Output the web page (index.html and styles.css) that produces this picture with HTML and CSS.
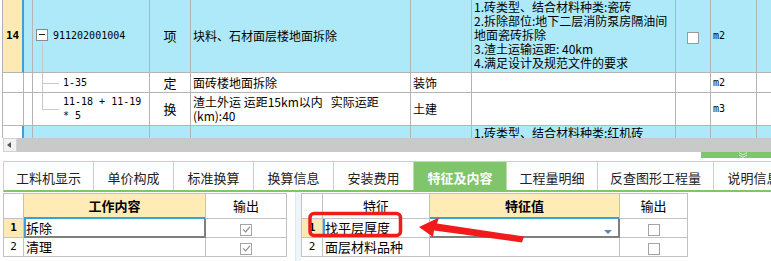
FILE: index.html
```html
<!DOCTYPE html>
<html lang="zh-CN">
<head>
<meta charset="UTF-8" />
<title>清单特征及内容</title>
<link rel="stylesheet" href="styles.css">
</head>
<body>

  <div class="grid-wrap">
    <table class="bill">
      <colgroup>
        <col class="c-num"><col class="c-gap"><col class="c-code"><col class="c-type"><col class="c-name">
        <col class="c-major"><col class="c-feat"><col class="c-chk"><col class="c-unit"><col class="c-rest">
      </colgroup>
      <tr class="item">
        <td class="num">14</td>
        <td></td>
        <td class="code root"><span class="fold"></span>911202001004</td>
        <td class="type">项</td>
        <td>块料、石材面层楼地面拆除</td>
        <td></td>
        <td class="feat">1.砖类型、结合材料种类:瓷砖<br>2.拆除部位:地下二层消防泵房隔油间<br>地面瓷砖拆除<br>3.渣土运输运距: 40km<br>4.满足设计及规范文件的要求</td>
        <td class="chk"><span class="box"></span></td>
        <td class="unit">m2</td>
        <td></td>
      </tr>
      <tr class="sub first">
        <td class="num"></td>
        <td></td>
        <td class="code leaf">1-35</td>
        <td class="type">定</td>
        <td>面砖楼地面拆除</td>
        <td>装饰</td>
        <td></td>
        <td></td>
        <td class="unit">m2</td>
        <td></td>
      </tr>
      <tr class="sub last">
        <td class="num"></td>
        <td></td>
        <td class="code leaf">11-18 + 11-19<br>* 5</td>
        <td class="type">换</td>
        <td class="twoline">渣土外运 运距15km以内&nbsp;&nbsp;&nbsp;实际运距<br>(km):40</td>
        <td>土建</td>
        <td></td>
        <td></td>
        <td class="unit">m3</td>
        <td></td>
      </tr>
      <tr class="item next">
        <td class="num"></td>
        <td></td>
        <td></td>
        <td></td>
        <td></td>
        <td></td>
        <td class="feat">1.砖类型、结合材料种类:红机砖</td>
        <td></td>
        <td></td>
        <td></td>
      </tr>
    </table>
  </div>

  <div class="hscroll">
    <span class="hscroll-btn"></span>
    <span class="hscroll-track"></span>
  </div>

  <div class="splitter">
    <span class="grip">
      <svg width="10" height="6" viewBox="0 0 10 6"><path d="M1 0.5 L5 3 L9 0.5 M1 3 L5 5.5 L9 3" stroke="#d9f0d2" stroke-width="1" fill="none"/></svg>
    </span>
  </div>

  <div class="tabs">
    <div class="tab tab-first">工料机显示</div>
    <div class="tab">单价构成</div>
    <div class="tab">标准换算</div>
    <div class="tab">换算信息</div>
    <div class="tab">安装费用</div>
    <div class="tab tab-on">特征及内容</div>
    <div class="tab tab-mid">工程量明细</div>
    <div class="tab tab-long">反查图形工程量</div>
    <div class="tab">说明信息</div>
  </div>

  <div class="detail">
    <table class="sheet work">
      <colgroup><col class="w-num"><col class="w-content"><col class="w-out"></colgroup>
      <tr>
        <th></th>
        <th class="hl focus">工作内容</th>
        <th>输出</th>
      </tr>
      <tr>
        <td class="rn cur">1</td>
        <td class="edit">拆除</td>
        <td class="mid"><span class="cb"><svg width="9" height="9" viewBox="0 0 9 9"><path d="M1.2 4.4 L3.6 6.8 L7.9 1.8" stroke="#8c8c8c" stroke-width="1.2" fill="none"/></svg></span></td>
      </tr>
      <tr>
        <td class="rn">2</td>
        <td>清理</td>
        <td class="mid"><span class="cb"><svg width="9" height="9" viewBox="0 0 9 9"><path d="M1.2 4.4 L3.6 6.8 L7.9 1.8" stroke="#8c8c8c" stroke-width="1.2" fill="none"/></svg></span></td>
      </tr>
    </table>

    <div class="strip"></div>

    <table class="sheet feature">
      <colgroup><col class="w-num2"><col class="w-name"><col class="w-value"><col class="w-out2"></colgroup>
      <tr>
        <th></th>
        <th>特征</th>
        <th class="hl focus">特征值</th>
        <th>输出</th>
      </tr>
      <tr>
        <td class="rn cur">1</td>
        <td class="sel">找平层厚度</td>
        <td class="edit"><span class="drop"></span></td>
        <td class="mid"><span class="cb"></span></td>
      </tr>
      <tr>
        <td class="rn">2</td>
        <td>面层材料品种</td>
        <td></td>
        <td class="mid"><span class="cb"></span></td>
      </tr>
    </table>
  </div>

  <!-- red markup drawn over the screenshot -->
  <svg class="annot" width="771" height="261" viewBox="0 0 771 261">
    <rect x="310" y="213.5" width="90.5" height="22" rx="4" fill="none" stroke="#f01c1c" stroke-width="3.5"/>
    <polygon points="419,227 439,217.5 437,223.5 524,236.5 522,242.5 434,230.5 433,237" fill="#f01c1c"/>
  </svg>

</body>
</html>
```

FILE: styles.css
```css
* {
  box-sizing: border-box;
}

body {
  margin: 0;
  width: 771px;
  height: 261px;
  overflow: hidden;
  position: relative;
  background: #fff;
  color: #000;
  font-family: "Noto Sans CJK SC", "Noto Sans", sans-serif;
  font-size: 12px;
}

/* ---------- top bill grid ---------- */
.grid-wrap {
  height: 138px;
  overflow: hidden;
  padding-left: 2px;
}

.bill {
  border-collapse: separate;
  border-spacing: 0;
  table-layout: fixed;
  width: 799px;
}
.c-num { width: 22px; }
.c-gap { width: 9px; }
.c-code { width: 117px; }
.c-type { width: 41px; }
.c-name { width: 220px; }
.c-major { width: 61px; }
.c-feat { width: 204px; }
.c-chk { width: 35px; }
.c-unit { width: 46px; }
.c-rest { width: 44px; }

.bill td {
  position: relative;
  border-right: 1px solid #b4b4b4;
  border-bottom: 1px solid #b4b4b4;
  padding: 0 2px;
  line-height: 14px;
  vertical-align: middle;
  white-space: nowrap;
  overflow: hidden;
  background: #fff;
}
.bill td:first-child {
  border-left: 1px solid #b4b4b4;
}

.bill .item td { background: #ade9f9; }
.bill .item { height: 73px; }
.bill .sub.first { height: 20px; }
.bill .sub.last { height: 33px; }
.bill .item.next { height: 40px; }
.bill .item.next td { vertical-align: top; }
.bill .item.next td.num { background: #fff; }

.bill .item td.num {
  background: #fde9b3;
  border-right: 2px solid #3ba0d8;
  text-align: center;
  font-family: "DejaVu Sans Mono", monospace;
  font-size: 11px;
  font-weight: bold;
}

.code {
  font-family: "DejaVu Sans Mono", monospace;
  font-size: 10px;
}
.code.root { padding-left: 3px; }
.code.leaf { padding-left: 30px; }

.twoline { line-height: 14.5px; }

.fold {
  display: inline-block;
  vertical-align: middle;
  position: relative;
  width: 12px;
  height: 12px;
  margin: -2px 5px 0 0;
  border: 1px solid #8a8a8a;
  background: #fff;
}
.fold::after {
  content: "";
  position: absolute;
  left: 2px;
  right: 2px;
  top: 4px;
  border-top: 1px solid #222;
}

/* tree connectors */
.code.root::after {
  content: "";
  position: absolute;
  left: 9px;
  top: 43px;
  bottom: -1px;
  border-left: 1px solid #c8c8c8;
}
.code.leaf::before {
  content: "";
  position: absolute;
  left: 9px;
  top: 0;
  height: 50%;
  width: 16px;
  border-left: 1px solid #c8c8c8;
  border-bottom: 1px solid #c8c8c8;
}
.sub.first .code.leaf::after {
  content: "";
  position: absolute;
  left: 9px;
  top: 50%;
  bottom: -1px;
  border-left: 1px solid #c8c8c8;
}

.type { text-align: center; font-size: 13px; }

.feat {
  vertical-align: top;
  padding: 0 0 0 2px;
  line-height: 14.4px;
}
.bill .item td.feat { vertical-align: top; }

.chk { text-align: center; }
.box {
  display: inline-block;
  width: 12px;
  height: 12px;
  margin-top: 2px;
  border: 1px solid #9a9a9a;
  background: #fff;
  vertical-align: middle;
}

.unit {
  font-family: "DejaVu Sans Mono", monospace;
  font-size: 10px;
}

/* ---------- horizontal scroll bar ---------- */
.hscroll {
  display: flex;
  height: 14px;
  padding-left: 3px;
}
.hscroll-btn {
  position: relative;
  width: 14px;
  background: #f2f2f2;
  border: 1px solid #d2d2d2;
}
.hscroll-btn::after {
  content: "";
  position: absolute;
  left: 3px;
  top: 3px;
  border-top: 3px solid transparent;
  border-bottom: 3px solid transparent;
  border-right: 4px solid #555;
}
.hscroll-track {
  flex: 1;
  background: #c9c9c9;
}

/* ---------- splitter ---------- */
.splitter {
  display: flex;
  justify-content: flex-end;
  height: 9px;
}
.grip {
  display: flex;
  justify-content: center;
  width: 70px;
  height: 6px;
  padding-left: 14px;
  background: #80c46b;
}

/* ---------- tabs ---------- */
.tabs {
  display: flex;
  height: 31px;
  margin-left: 3px;
  border-top: 1px solid #b7e1a9;
  border-left: 1px solid #b7e1a9;
  border-bottom: 2px solid #80c46b;
  font-size: 13px;
  color: #222;
}
.tab {
  flex: none;
  width: 80px;
  display: flex;
  align-items: center;
  justify-content: center;
  padding-top: 2px;
  border-right: 1px solid #b7e1a9;
}
.tab-first { width: 90px; }
.tab-on {
  width: 93px;
  background: #80c46b;
  color: #fff;
  font-weight: bold;
}
.tab-mid { width: 91px; }
.tab-long { width: 116px; }

/* ---------- bottom detail grids ---------- */
.detail {
  display: flex;
  align-items: flex-start;
  height: 69px;
}

.sheet {
  border-collapse: separate;
  border-spacing: 0;
  table-layout: fixed;
  margin-top: 1px;
  font-size: 13px;
}
.sheet th,
.sheet td {
  border-right: 1px solid #c2c2c2;
  border-bottom: 1px solid #c2c2c2;
  padding: 0 2px;
  height: 19px;
  line-height: 16px;
  white-space: nowrap;
  overflow: hidden;
  background: #fff;
}
.sheet th {
  height: 26px;
  border-top: 1px solid #c2c2c2;
  font-weight: normal;
  text-align: center;
}
.sheet th:first-child,
.sheet td:first-child {
  border-left: 1px solid #c2c2c2;
}
.sheet th.hl {
  background: #feebb6;
  font-weight: bold;
}
.sheet th.focus {
  border-bottom-color: #3ba0d8;
  box-shadow: inset 0 -1px #3ba0d8;
}

.work { margin-left: 3px; width: 284px; }
.w-num { width: 21px; }
.w-content { width: 182px; }
.w-out { width: 81px; }

.feature { width: 387px; }
.w-num2 { width: 22px; }
.w-name { width: 107px; }
.w-value { width: 190px; }
.w-out2 { width: 68px; }

.strip {
  align-self: stretch;
  width: 6px;
  margin-left: 8px;
  background: #eef4fa;
  border-left: 1px solid #dfe7ef;
}

.rn {
  text-align: center;
  font-family: "DejaVu Sans Mono", monospace;
  font-size: 11px;
}
.sheet td.rn.cur {
  background: #fde9b3;
  font-weight: bold;
}

.sheet td.sel {
  box-shadow: inset 2px 0 #3ba0d8;
}
.sheet td.edit {
  border-right-color: #7f7f7f;
  border-bottom-color: #7f7f7f;
  box-shadow: inset 2px 0 #3ba0d8, inset -1px -1px #7f7f7f;
}
.feature td.edit {
  box-shadow: inset -1px -1px #7f7f7f;
}

.drop {
  float: right;
  margin: 7px 5px 0 0;
  border-left: 4px solid transparent;
  border-right: 4px solid transparent;
  border-top: 4px solid #5d88b8;
}

.mid { text-align: center; }
.cb {
  display: inline-flex;
  align-items: center;
  justify-content: center;
  width: 12px;
  height: 12px;
  margin-top: 1px;
  vertical-align: middle;
  border: 1px solid #a4a4a4;
  background: #fff;
}

/* ---------- red markup ---------- */
.annot {
  position: absolute;
  left: 0;
  top: 0;
  pointer-events: none;
}
```
